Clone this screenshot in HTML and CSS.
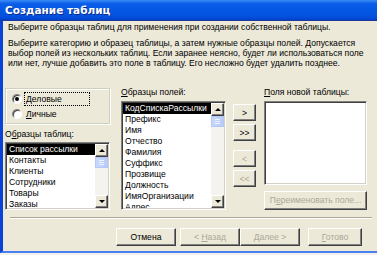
FILE: index.html
```html
<!DOCTYPE html>
<html lang="ru">
<head>
<meta charset="utf-8">
<title>Создание таблиц</title>
<link rel="stylesheet" href="styles.css">
</head>
<body>
<div class="window">
  <div class="titlebar"><span class="title">Создание таблиц</span></div>
  <div class="body">
    <p class="intro">Выберите образцы таблиц для применения при создании собственной таблицы.</p>
    <p class="desc">Выберите категорию и образец таблицы, а затем нужные образцы полей. Допускается<br>выбор полей из нескольких таблиц. Если заранее неясно, будет ли использоваться поле<br>или нет, лучше добавить это поле в таблицу. Его несложно будет удалить позднее.</p>
    <div class="main">
      <div class="col col-left">
        <div class="groupbox">
          <label class="radio"><span class="radio-dot checked"></span><span class="focus"><u>Д</u>еловые</span></label>
          <label class="radio"><span class="radio-dot"></span><span><u>Л</u>ичные</span></label>
        </div>
        <div class="label label-tables">О<u>б</u>разцы таблиц:</div>
        <div class="listbox list-tables">
          <ul class="items">
            <li class="sel">Список рассылки</li>
            <li>Контакты</li>
            <li>Клиенты</li>
            <li>Сотрудники</li>
            <li>Товары</li>
            <li>Заказы</li>
          </ul>
          <div class="scrollbar">
            <div class="sb-btn"><span class="tri-up"></span></div>
            <div class="sb-thumb"><span></span><span></span><span></span></div>
            <div class="sb-track"></div>
            <div class="sb-btn"><span class="tri-down"></span></div>
          </div>
        </div>
      </div>
      <div class="col col-mid">
        <div class="label"><u>О</u>бразцы полей:</div>
        <div class="listbox list-fields">
          <ul class="items">
            <li class="sel">КодСпискаРассылки</li>
            <li>Префикс</li>
            <li>Имя</li>
            <li>Отчество</li>
            <li>Фамилия</li>
            <li>Суффикс</li>
            <li>Прозвище</li>
            <li>Должность</li>
            <li>ИмяОрганизации</li>
            <li>Адрес</li>
          </ul>
          <div class="scrollbar">
            <div class="sb-btn"><span class="tri-up"></span></div>
            <div class="sb-thumb"><span></span><span></span><span></span></div>
            <div class="sb-track"></div>
            <div class="sb-btn"><span class="tri-down"></span></div>
          </div>
        </div>
      </div>
      <div class="col col-btns">
        <button class="btn small b1">&gt;</button>
        <button class="btn small b2">&gt;&gt;</button>
        <button class="btn small b3 disabled">&lt;</button>
        <button class="btn small b4 disabled">&lt;&lt;</button>
      </div>
      <div class="col col-right">
        <div class="label"><u>П</u>оля новой таблицы:</div>
        <div class="listbox list-new"></div>
        <button class="btn rename disabled"><span>П<u>е</u>реименовать поле...</span></button>
      </div>
    </div>
    <div class="separator"></div>
    <div class="footer">
      <button class="btn wide cancel"><span>Отмена</span></button>
      <button class="btn wide disabled"><span>&lt; <u>Н</u>азад</span></button>
      <button class="btn wide disabled"><span><u>Д</u>алее &gt;</span></button>
      <button class="btn wide finish disabled"><span><u>Г</u>отово</span></button>
    </div>
  </div>
</div>
</body>
</html>
```

FILE: styles.css
```css
* { box-sizing: border-box; }
html, body { margin: 0; padding: 0; }
body {
  width: 377px;
  height: 255px;
  overflow: hidden;
  background: #f2f1ea;
  font-family: "Liberation Sans", Arial, sans-serif;
  font-size: 8.6px;
  color: #000;
}
.window {
  width: 377px;
  height: 253px;
  background: #ece9d8;
  border-left: 3px solid #0842d8;
  border-bottom: 2px solid #4a7ff0;
  display: flex;
  flex-direction: column;
}
.titlebar {
  height: 21px;
  flex: none;
  margin-left: -3px;
  padding-left: 5px;
  display: flex;
  align-items: center;
  background: linear-gradient(to bottom, #3c8cf8 0%, #0a5ee8 18%, #0558e4 50%, #0450dc 85%, #0340c8 100%);
  border-bottom: 1px solid #1a3b9c;
}
.title {
  color: #fff;
  font-family: "DejaVu Sans", sans-serif;
  font-weight: bold;
  font-size: 10.5px;
  text-shadow: 1px 1px 0 #0a2a90;
}
.body {
  flex: 1;
  padding: 0 0 0 2px;
  display: flex;
  flex-direction: column;
}
.intro {
  margin: 1px 0 0 3px;
  line-height: 10px;
  height: 10px;
  white-space: nowrap;
}
.desc {
  margin: 6px 0 0 3px;
  line-height: 10px;
  white-space: nowrap;
}
.main {
  display: flex;
  margin-top: 18px;
  height: 124px;
}
.col { display: flex; flex-direction: column; }
.col-left { width: 105px; }
.col-mid { width: 105px; margin-left: 11px; }
.col-btns { width: 23px; margin-left: 7px; padding-top: 18px; }
.col-right { width: 103px; margin-left: 8px; }

.groupbox {
  margin-top: 2px;
  height: 36px;
  border: 1px solid #d0d0bf;
  box-shadow: inset 1px 1px 0 #fff, 1px 1px 0 #fff;
  padding: 4px 0 0 6px;
  display: flex;
  flex-direction: column;
  gap: 3px;
}
.radio {
  display: flex;
  align-items: center;
  height: 12px;
  gap: 4px;
}
.radio-dot {
  width: 10px;
  height: 10px;
  flex: none;
  border-radius: 50%;
  background: #fff;
  border: 1px solid;
  border-color: #808080 #fff #fff #808080;
  box-shadow: inset 1px 1px 0 #404040;
  position: relative;
}
.radio-dot.checked::after {
  content: "";
  position: absolute;
  left: 2px;
  top: 2px;
  width: 4px;
  height: 4px;
  border-radius: 50%;
  background: #000;
}
.focus {
  outline: 1px dotted #000;
  outline-offset: 1px;
  padding-right: 26px;
  line-height: 10px;
}
.label {
  line-height: 10px;
  height: 10px;
  margin-top: 1px;
  white-space: nowrap;
}
.label-tables { margin-top: 5px; }

.listbox {
  background: #fff;
  border: 1px solid;
  border-color: #808080 #fff #fff #808080;
  box-shadow: inset 1px 1px 0 #404040, inset -1px -1px 0 #d4d0c8;
  display: flex;
  overflow: hidden;
  padding: 1px;
}
.list-tables { margin-top: 3px; height: 68px; }
.list-fields { margin-top: 4px; height: 109px; }
.list-new { margin-top: 4px; height: 86px; }
.items {
  list-style: none;
  margin: 0;
  padding: 0;
  flex: 1;
  overflow: hidden;
}
.items li {
  height: 11px;
  line-height: 11px;
  padding-left: 2px;
  white-space: nowrap;
}
.items li.sel {
  background: #000;
  color: #fff;
}
.scrollbar {
  width: 13px;
  flex: none;
  display: flex;
  flex-direction: column;
  background: #f4f3ee;
}
.sb-btn {
  height: 13px;
  flex: none;
  background: #ece9d8;
  border: 1px solid;
  border-color: #fff #404040 #404040 #fff;
  box-shadow: inset -1px -1px 0 #808080;
  display: flex;
  align-items: center;
  justify-content: center;
}
.tri-up, .tri-down {
  width: 0;
  height: 0;
  border-left: 3px solid transparent;
  border-right: 3px solid transparent;
}
.tri-up { border-bottom: 3px solid #000; }
.tri-down { border-top: 3px solid #000; }
.sb-thumb {
  height: 11px;
  flex: none;
  background: linear-gradient(to right, #c8d6fb, #b9ccfa);
  border: 1px solid #b4c8f6;
  display: flex;
  flex-direction: column;
  align-items: center;
  justify-content: center;
  gap: 1px;
}
.sb-thumb span {
  width: 5px;
  height: 1px;
  background: #eef3ff;
}
.sb-track { flex: 1; }

.btn {
  font: inherit;
  color: #000;
  background: #ece9d8;
  border: 1px solid;
  border-color: #fff #404040 #404040 #fff;
  box-shadow: inset -1px -1px 0 #808080;
  padding: 0;
  margin: 0;
  display: flex;
  align-items: center;
  justify-content: center;
  white-space: pre;
}
.btn.disabled { color: #aca899; }
.btn.small { width: 23px; height: 17px; }
.b2 { margin-top: 3px; }
.b3 { margin-top: 9px; }
.b4 { margin-top: 3px; }
.rename { margin-top: 6px; height: 20px; width: 103px; }

.separator {
  margin: 7px 5px 0 5px;
  height: 2px;
  flex: none;
  border-top: 1px solid #aca899;
  border-bottom: 1px solid #fff;
}
.footer {
  display: flex;
  margin-top: 9px;
  padding-left: 111px;
}
.btn.wide { width: 60px; height: 18px; }
.cancel { margin-right: 4px; }
.finish { margin-left: 8px; width: 54px !important; }
```
